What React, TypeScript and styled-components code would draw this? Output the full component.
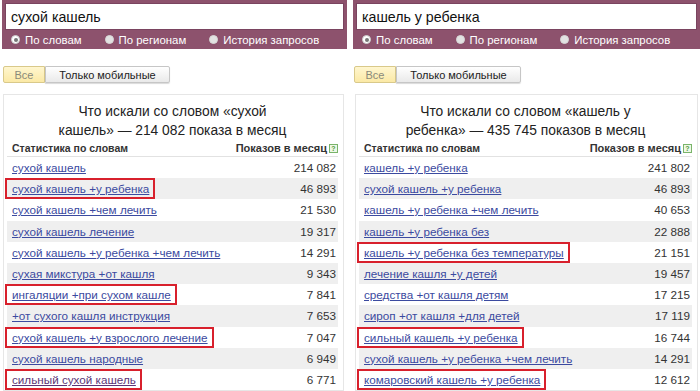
import React from "react";
import styled, { createGlobalStyle } from "styled-components";

const GlobalStyle = createGlobalStyle`
  html, body { margin: 0; padding: 0; background: #fff; }
  body { font-family: "Liberation Sans", Arial, sans-serif; color: #222; }
`;

const Page = styled.div`
  display: flex;
  gap: 6px;
  padding-left: 2px;
  width: 700px;
  height: 391px;
  overflow: hidden;
  box-sizing: border-box;
`;

const Panel = styled.div<{ $w: number }>`
  width: ${(p) => p.$w}px;
  flex: none;
  display: flex;
  flex-direction: column;
`;

const SearchBar = styled.div`
  background: #8d526d;
  height: 49px;
  padding: 3px 3px 0 3px;
  box-sizing: border-box;
  display: flex;
  flex-direction: column;
`;

const QueryBox = styled.div`
  background: #fff;
  height: 27px;
  box-sizing: border-box;
  border: 1px solid #7a4460;
  display: flex;
  align-items: center;
  padding-left: 5px;
  font-size: 14.2px;
  color: #111;
`;

const RadioRow = styled.div`
  display: flex;
  align-items: center;
  height: 19px;
  padding-left: 6px;
  color: #fff;
  font-size: 11.4px;
`;

const RadioItem = styled.label<{ $gap: number }>`
  display: flex;
  align-items: center;
  gap: 5px;
  margin-right: ${(p) => p.$gap}px;
`;

const RadioDot = styled.span<{ $on?: boolean }>`
  width: 9px;
  height: 9px;
  border-radius: 50%;
  box-sizing: border-box;
  background: ${(p) => (p.$on ? "#fff" : "#e2e2e2")};
  border: 1px solid ${(p) => (p.$on ? "#ccc" : "#d8d8d8")};
  display: flex;
  align-items: center;
  justify-content: center;
  &::after {
    content: "";
    width: 4px;
    height: 4px;
    border-radius: 50%;
    background: ${(p) => (p.$on ? "#777" : "transparent")};
  }
`;

const Tabs = styled.div`
  display: flex;
  margin: 17px 0 0 1px;
`;

const TabButton = styled.div<{ $active?: boolean; $w: number }>`
  width: ${(p) => p.$w}px;
  height: 17px;
  box-sizing: border-box;
  display: flex;
  align-items: center;
  justify-content: center;
  font-size: 11px;
  border: 1px solid ${(p) => (p.$active ? "#d9c98a" : "#c6c6c6")};
  border-radius: ${(p) => (p.$active ? "2px 0 0 2px" : "0 2px 2px 0")};
  color: ${(p) => (p.$active ? "#8a8a7a" : "#222")};
  background: ${(p) =>
    p.$active
      ? "linear-gradient(#fff6cf, #fbe9a6)"
      : "linear-gradient(#ffffff, #e9e9e9)"};
  box-shadow: ${(p) => (p.$active ? "none" : "0 1px 1px rgba(0,0,0,0.15)")};
`;

const Card = styled.div<{ $w: number; $ml: number }>`
  margin: 11px 0 0 ${(p) => p.$ml}px;
  width: ${(p) => p.$w}px;
  border: 1px solid #e6e6e6;
  box-sizing: border-box;
  padding: 0 5px 0 3px;
`;

const Title = styled.div`
  text-align: center;
  font-size: 13.8px;
  line-height: 19px;
  padding: 7px 20px 0;
  color: #222;
`;

const HeadRow = styled.div`
  display: flex;
  justify-content: space-between;
  align-items: center;
  height: 16px;
  padding: 0 0 0 5px;
  border-bottom: 1px solid #e2e2e2;
  font-size: 10.5px;
  font-weight: bold;
  color: #333;
`;

const HeadRight = styled.span`
  display: flex;
  align-items: center;
  gap: 2px;
  font-size: 11px;
`;

const Help = styled.span`
  width: 9px;
  height: 9px;
  box-sizing: border-box;
  border: 1px solid #79b46a;
  background: #eef8e6;
  color: #4f9a3e;
  font-size: 7px;
  line-height: 7px;
  text-align: center;
  font-weight: bold;
`;

const Row = styled.div<{ $alt: boolean }>`
  display: flex;
  justify-content: space-between;
  align-items: center;
  height: 21.2px;
  padding: 0 2px 0 5px;
  background: ${(p) => (p.$alt ? "#efefef" : "transparent")};
`;

const Link = styled.span<{ $mark?: boolean; $visited?: boolean }>`
  position: relative;
  font-size: 11.7px;
  color: ${(p) => (p.$visited ? "#5b3577" : "#3b4aa0")};
  text-decoration: underline;
  white-space: nowrap;
  &::after {
    content: "";
    display: ${(p) => (p.$mark ? "block" : "none")};
    position: absolute;
    left: -7px;
    right: -6px;
    top: -4px;
    bottom: -4px;
    border: 2px solid #d8202c;
  }
`;

const Count = styled.span`
  font-size: 11.7px;
  color: #333;
`;

type Item = { q: string; n: string; mark?: boolean; visited?: boolean };

const left: Item[] = [
  { q: "сухой кашель", n: "214 082" },
  { q: "сухой кашель +у ребенка", n: "46 893", mark: true },
  { q: "сухой кашель +чем лечить", n: "21 530" },
  { q: "сухой кашель лечение", n: "19 317" },
  { q: "сухой кашель +у ребенка +чем лечить", n: "14 291" },
  { q: "сухая микстура +от кашля", n: "9 343" },
  { q: "ингаляции +при сухом кашле", n: "7 841", mark: true },
  { q: "+от сухого кашля инструкция", n: "7 653" },
  { q: "сухой кашель +у взрослого лечение", n: "7 047", mark: true },
  { q: "сухой кашель народные", n: "6 949" },
  { q: "сильный сухой кашель", n: "6 771", mark: true, visited: true },
];

const right: Item[] = [
  { q: "кашель +у ребенка", n: "241 802" },
  { q: "сухой кашель +у ребенка", n: "46 893" },
  { q: "кашель +у ребенка +чем лечить", n: "40 653" },
  { q: "кашель +у ребенка без", n: "22 888" },
  { q: "кашель +у ребенка без температуры", n: "21 151", mark: true },
  { q: "лечение кашля +у детей", n: "19 457" },
  { q: "средства +от кашля детям", n: "17 215" },
  { q: "сироп +от кашля +для детей", n: "17 119" },
  { q: "сильный кашель +у ребенка", n: "16 744", mark: true },
  { q: "сухой кашель +у ребенка +чем лечить", n: "14 291" },
  { q: "комаровский кашель +у ребенка", n: "12 612", mark: true },
];

function StatPanel(props: {
  w: number;
  cardW: number;
  cardMl: number;
  query: string;
  title1: string;
  title2: string;
  items: Item[];
}) {
  return (
    <Panel $w={props.w}>
      <SearchBar>
        <QueryBox>{props.query}</QueryBox>
        <RadioRow>
          <RadioItem $gap={23}>
            <RadioDot $on />
            По словам
          </RadioItem>
          <RadioItem $gap={23}>
            <RadioDot />
            По регионам
          </RadioItem>
          <RadioItem $gap={0}>
            <RadioDot />
            История запросов
          </RadioItem>
        </RadioRow>
      </SearchBar>
      <Tabs>
        <TabButton $active $w={42}>
          Все
        </TabButton>
        <TabButton $w={125}>Только мобильные</TabButton>
      </Tabs>
      <Card $w={props.cardW} $ml={props.cardMl}>
        <Title>
          {props.title1}
          <br />
          {props.title2}
        </Title>
        <HeadRow>
          <span>Статистика по словам</span>
          <HeadRight>
            Показов в месяц
            <Help>?</Help>
          </HeadRight>
        </HeadRow>
        {props.items.map((it, i) => (
          <Row key={i} $alt={i % 2 === 1}>
            <Link $mark={it.mark} $visited={it.visited}>
              {it.q}
            </Link>
            <Count>{it.n}</Count>
          </Row>
        ))}
      </Card>
    </Panel>
  );
}

export default function App() {
  return (
    <>
      <GlobalStyle />
      <Page>
        <StatPanel
          w={345}
          cardW={341}
          cardMl={1}
          query="сухой кашель"
          title1="Что искали со словом «сухой"
          title2="кашель» — 214 082 показа в месяц"
          items={left}
        />
        <StatPanel
          w={347}
          cardW={343}
          cardMl={2}
          query="кашель у ребенка"
          title1="Что искали со словом «кашель у"
          title2="ребенка» — 435 745 показов в месяц"
          items={right}
        />
      </Page>
    </>
  );
}
